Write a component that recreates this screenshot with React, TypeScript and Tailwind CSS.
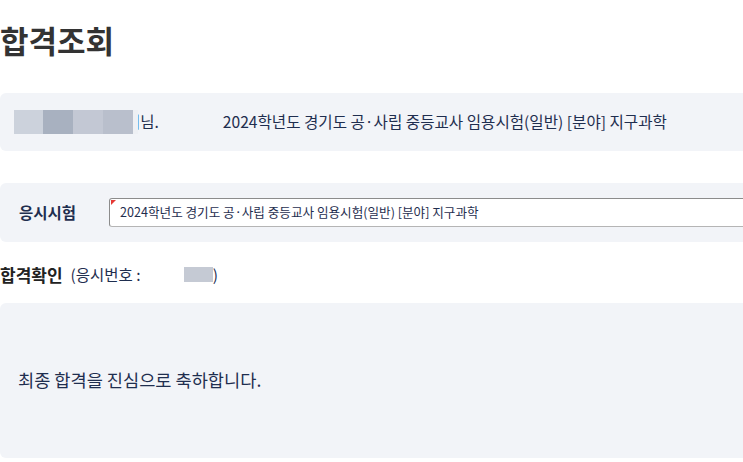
const font = { fontFamily: '"Noto Sans CJK KR", "Noto Sans", sans-serif' };

const examName = "2024학년도 경기도 공·사립 중등교사 임용시험(일반) [분야] 지구과학";

const Mosaic = () => (
  <div className="relative z-10 flex h-6 w-[124px] shrink-0">
    <div className="w-[29px] bg-[#ccd2dc]" />
    <div className="w-[30px] bg-[#a8b1c0]" />
    <div className="w-[30px] bg-[#c3c8d4]" />
    <div className="w-[30px] bg-[#b9bfcc]" />
    <div className="w-[5px] bg-[#eef0f4]" />
  </div>
);

export default function App() {
  return (
    <div className="min-h-[462px] w-[743px] overflow-hidden bg-white" style={font}>
      <div className="w-[760px]">
        <h1 className="pt-[20px] text-[31px] font-bold leading-[40px] text-[#333333]">합격조회</h1>

        <div className="mt-[33px] flex h-[58px] items-center rounded-md bg-[#f2f4f8] pl-[14px]">
          <Mosaic />
          <span className="-ml-[12px] text-[15.5px] text-[#1f2e4f]">이님.</span>
          <span className="ml-[64px] text-[15.6px] text-[#1f2e4f]">{examName}</span>
        </div>

        <div className="mt-[32px] flex h-[59px] items-center rounded-md bg-[#f2f4f8] pl-[19px]">
          <span className="w-[90px] text-[15.5px] font-bold text-[#1f2e4f]">응시시험</span>
          <div className="relative flex h-[29px] flex-1 items-center rounded-[3px] border border-[#8c8c8c] border-b-[#b5b5b5] bg-white pl-[10px]">
            <span className="absolute left-[1px] top-[1px] h-0 w-0 border-r-[5px] border-t-[5px] border-r-transparent border-t-[#e53935]" />
            <span className="text-[12.6px] text-[#1f2e4f]">{examName}</span>
          </div>
        </div>

        <div className="mt-[20px] flex items-center">
          <span className="text-[17px] font-bold text-[#222222]">합격확인</span>
          <span className="ml-[8px] text-[15.5px] text-[#1f2e4f]">(응시번호 :</span>
          <span className="ml-[43px] h-[15px] w-[29px] bg-[#c5cad4]" />
          <span className="text-[15.5px] text-[#1f2e4f]">)</span>
        </div>

        <div className="mt-[15px] flex h-[155px] items-center rounded-md bg-[#f2f4f8] pl-[18px]">
          <span className="text-[17.6px] text-[#1f2e4f]">최종 합격을 진심으로 축하합니다.</span>
        </div>
      </div>
    </div>
  );
}
